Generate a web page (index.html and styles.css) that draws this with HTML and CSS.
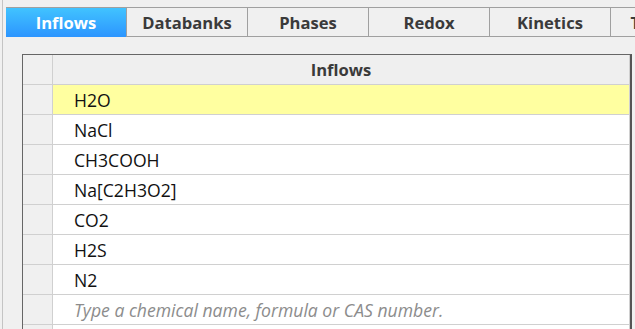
FILE: index.html
```html
<!DOCTYPE html>
<html>
<head>
<meta charset="utf-8">
<link rel="stylesheet" href="styles.css">
</head>
<body>
<div class="frame">
  <div class="tabs">
    <div class="tab active">Inflows</div>
    <div class="tab">Databanks</div>
    <div class="tab">Phases</div>
    <div class="tab">Redox</div>
    <div class="tab">Kinetics</div>
    <div class="tab">Titrations</div>
  </div>
  <div class="content">
    <div class="grid">
      <div class="row head"><div class="rh"></div><div class="cell">Inflows</div></div>
      <div class="row sel"><div class="rh"></div><div class="cell">H2O</div></div>
      <div class="row"><div class="rh"></div><div class="cell">NaCl</div></div>
      <div class="row"><div class="rh"></div><div class="cell">CH3COOH</div></div>
      <div class="row"><div class="rh"></div><div class="cell">Na[C2H3O2]</div></div>
      <div class="row"><div class="rh"></div><div class="cell">CO2</div></div>
      <div class="row"><div class="rh"></div><div class="cell">H2S</div></div>
      <div class="row"><div class="rh"></div><div class="cell">N2</div></div>
      <div class="row"><div class="rh"></div><div class="cell placeholder">Type a chemical name, formula or CAS number.</div></div>
      <div class="row"><div class="rh"></div><div class="cell"></div></div>
    </div>
  </div>
</div>
</body>
</html>
```
FILE: styles.css
```css
html, body {
  margin: 0;
  padding: 0;
  background: #f0f0f0;
  overflow: hidden;
  width: 635px;
  height: 329px;
}
body {
  font-family: "Open Sans", "Noto Sans", sans-serif;
}
.frame {
  margin-left: 2px;
  border-left: 1px solid #c4c4c4;
  height: 329px;
  padding-left: 3px;
  overflow: hidden;
}
.tabs {
  display: flex;
  margin-top: 7px;
  border-top: 1px solid #a0a0a0;
  height: 29px;
  white-space: nowrap;
}
.tab {
  flex: 0 0 120px;
  height: 28px;
  border-right: 1px solid #a0a0a0;
  border-bottom: 1px solid #a0a0a0;
  display: flex;
  align-items: center;
  justify-content: center;
  font-weight: bold;
  font-size: 16.6px;
  color: #3a3a3a;
  background: #f0f0f0;
}
.tab.active {
  height: 29px;
  border-bottom: none;
  background: linear-gradient(#41c3ff, #2c95ff);
  color: #ffffff;
}
.content {
  padding: 17px 0 0 16px;
}
.grid {
  width: 607px;
  border-left: 1px solid #666;
  border-top: 1px solid #666;
  border-right: 2px solid #555;
}
.row {
  display: flex;
  height: 29px;
  border-bottom: 1px solid #d0d0d0;
  background: #ffffff;
}
.rh {
  flex: 0 0 29px;
  border-right: 1px solid #d0d0d0;
  background: #f0f0f0;
}
.cell {
  flex: 1;
  border-right: 1px solid #d0d0d0;
  padding-left: 21px;
  display: flex;
  align-items: center;
  font-size: 17.6px;
  color: #111;
}
.row.head .cell {
  background: #efefef;
  justify-content: center;
  padding-left: 0;
  font-weight: bold;
  font-size: 16.6px;
  color: #3a3a3a;
}
.row.sel .cell {
  background: #ffffa0;
}
.cell.placeholder {
  font-style: italic;
  color: #8c8c8c;
}
```
